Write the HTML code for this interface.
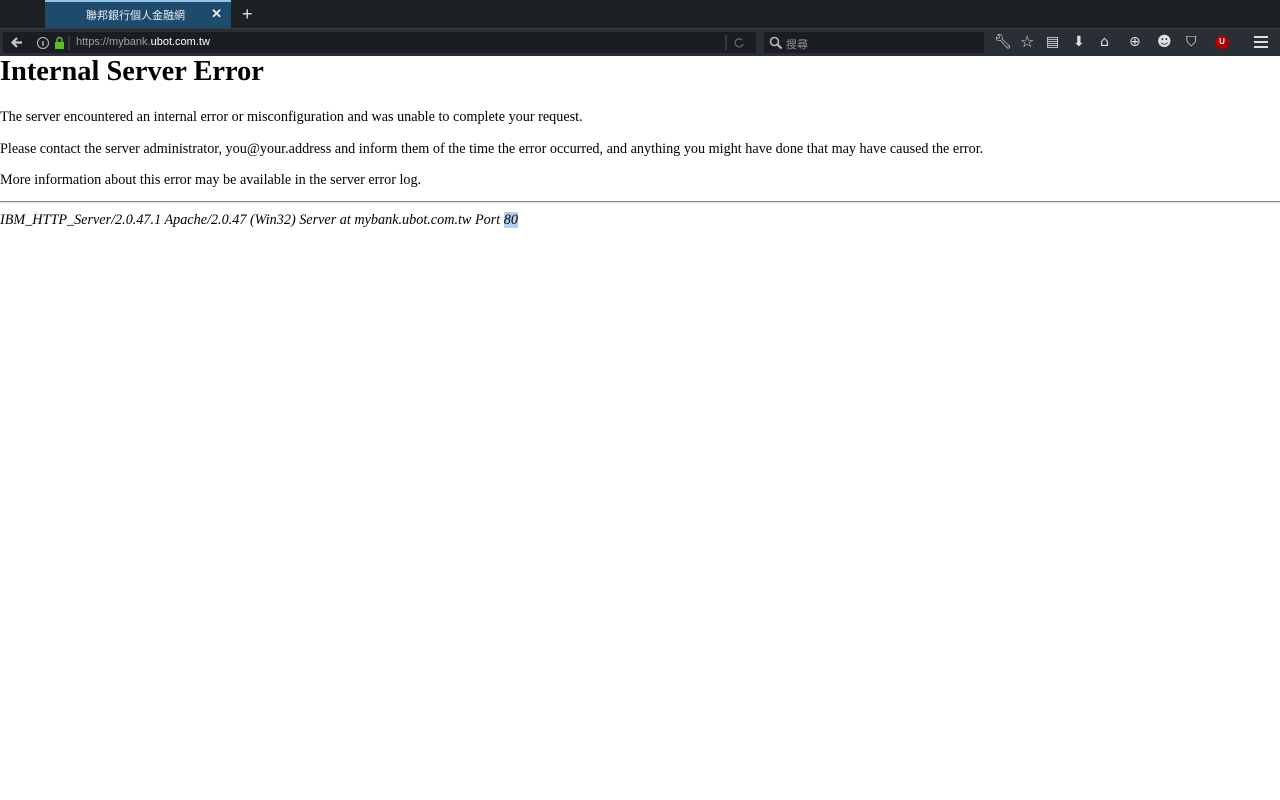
<!DOCTYPE html>
<html><head><meta charset="utf-8"><style>
*{margin:0;padding:0;box-sizing:border-box}
body{width:1280px;height:800px;background:#fff;position:relative;overflow:hidden;font-family:"Liberation Serif",serif;color:#000}
.tabbar{position:absolute;left:0;top:0;width:1280px;height:28px;background:#1d2126}
.tab{position:absolute;left:45px;top:0;width:186px;height:28px;background:#1e4a6c;border-top:2px solid #8fc3e8;color:#e6edf2;font:11px "Liberation Sans","Noto Sans CJK TC",sans-serif;}
.tab span{position:absolute;left:41px;top:5px}
.tab b{position:absolute;right:9px;top:4px;font-size:13px}
.plus{position:absolute;left:242px;top:4px;color:#e6e6e6;font:18px "Liberation Sans",sans-serif}
.tool{position:absolute;left:0;top:28px;width:1280px;height:28px;background:#2a2e35;border-top:1px solid #383c43}
.back{position:absolute;left:3px;top:3px;width:28px;height:21px;background:#1a1d21;border-radius:2px 0 0 2px}
.url{position:absolute;left:31px;top:3px;width:725px;height:21px;background:#1a1d21;color:#9aa0a6;font:11px "Liberation Sans",sans-serif}
.url .t{position:absolute;left:45px;top:4px}
.url .t em{font-style:normal;color:#fff}
.search{position:absolute;left:764px;top:3px;width:220px;height:21px;background:#1a1d21;color:#8a8f96;font:11px "Liberation Sans","Noto Sans CJK TC",sans-serif}
.ic{position:absolute;top:5px;color:#e0e0e0;font:14px "DejaVu Sans",sans-serif}
.c{position:absolute;left:0;font-size:14.2px;white-space:nowrap}
h1{position:absolute;left:0;top:56px;font-size:28.4px;font-weight:bold;white-space:nowrap}
hr{position:absolute;left:0;top:201px;width:1280px;border:0;border-top:1px solid #888;border-bottom:1px solid #ddd}
</style></head><body>
<div class="tabbar"><div class="tab"><span>聯邦銀行個人金融網</span><b>✕</b></div><div class="plus">+</div></div>
<div class="tool">
<div class="back"><svg width="28" height="21"><path d="M19 10.5H10M14 6l-4.5 4.5L14 15" stroke="#c8c8c8" stroke-width="2.2" fill="none"/></svg></div>
<div class="url">
<svg style="position:absolute;left:5px;top:4px" width="34" height="14"><circle cx="7" cy="7" r="5.5" stroke="#bbb" fill="none"/><path d="M7 5v5" stroke="#bbb" stroke-width="1.4"/><rect x="19" y="6" width="9" height="7" fill="#5cbf2a"/><path d="M21 6V4a2.5 2.5 0 0 1 5 0v2" stroke="#5cbf2a" stroke-width="1.5" fill="none"/><path d="M33 0v14" stroke="#555"/></svg>
<span class="t">https://mybank.<em>ubot.com.tw</em></span>
<svg style="position:absolute;left:694px;top:3px" width="30" height="15"><path d="M1 0v15" stroke="#555"/><path d="M17 5a4 4 0 1 0 1 4" stroke="#666" fill="none" stroke-width="1.3"/></svg></div>
<div class="search"><svg style="position:absolute;left:5px;top:4px" width="14" height="14"><circle cx="5.5" cy="5.5" r="4" stroke="#bbb" stroke-width="1.6" fill="none"/><path d="M8.5 8.5l4 4" stroke="#bbb" stroke-width="2"/></svg><span style="position:absolute;left:22px;top:4px">搜尋</span></div>
<span class="ic" style="left:994px">🔧︎</span>
<span class="ic" style="left:1020px;top:3px;font-size:16px">☆</span>
<span class="ic" style="left:1046px">▤</span>
<span class="ic" style="left:1073px">⬇</span>
<span class="ic" style="left:1100px">⌂</span>
<span class="ic" style="left:1129px">⊕</span>
<span class="ic" style="left:1157px">☻</span>
<span class="ic" style="left:1186px">⛉</span>
<div style="position:absolute;left:1215px;top:6px;width:14px;height:14px;border-radius:7px;background:#a00;color:#fff;font:bold 8px 'Liberation Sans',sans-serif;text-align:center;line-height:14px">U</div>
<svg style="position:absolute;left:1254px;top:7px" width="14" height="12"><path d="M0 1h14M0 6h14M0 11h14" stroke="#e0e0e0" stroke-width="2"/></svg>
</div>
<h1>Internal Server Error</h1>
<p class="c" style="top:109px">The server encountered an internal error or misconfiguration and was unable to complete your request.</p>
<p class="c" style="top:141px">Please contact the server administrator, you@your.address and inform them of the time the error occurred, and anything you might have done that may have caused the error.</p>
<p class="c" style="top:172px">More information about this error may be available in the server error log.</p>
<hr>
<p class="c" style="top:212px;font-style:italic">IBM_HTTP_Server/2.0.47.1 Apache/2.0.47 (Win32) Server at mybank.ubot.com.tw Port <span style="background:#b4d0ef">80</span></p>
</body></html>
